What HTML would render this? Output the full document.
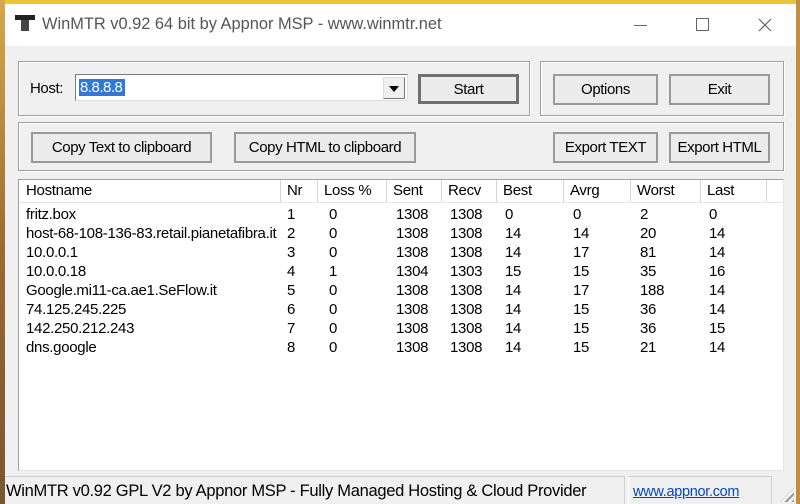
<!DOCTYPE html>
<html><head><meta charset="utf-8"><style>
*{box-sizing:border-box;margin:0;padding:0}
body{width:800px;height:504px;overflow:hidden;background:#f0f0f0;font-family:"Liberation Sans",Arial,sans-serif;position:relative;font-size:14px;color:#000}
.a{position:absolute;white-space:nowrap}
.grp{position:absolute;border:1px solid #a0a0a0;box-shadow:inset 1px 1px 0 #fff,1px 1px 0 #fff}
.btn{position:absolute;background:#ececec;border:2px solid #9a9a9a;display:flex;align-items:center;justify-content:center;font-size:15px;letter-spacing:-0.4px;white-space:nowrap}
.hd{position:absolute;top:0;height:22px;border-right:1px solid #d5d5d5;padding-left:6px;line-height:22px;font-size:15px;letter-spacing:-0.3px;white-space:nowrap}
.row{position:absolute;left:0;height:19px;font-size:15px;line-height:19px;letter-spacing:-0.3px;white-space:nowrap}
.row span{position:absolute}
</style></head><body>
<div class="a" style="left:0;top:0;width:800px;height:4px;background:#e8c63a"></div>
<div class="a" style="left:0;top:0;width:5px;height:504px;background:linear-gradient(#d8a84a,#9a6a30,#7a5530)"></div>
<div class="a" style="left:796px;top:0;width:4px;height:504px;background:#c09040"></div>
<div class="a" style="left:5px;top:4px;width:791px;height:42px;background:#fff"></div>
<div class="a" style="left:15px;top:15px;width:20px;height:5px;background:#222"></div>
<div class="a" style="left:21px;top:20px;width:8px;height:11px;background:#444"></div>
<div class="a" style="left:42px;top:15px;font-size:16.4px;color:#555">WinMTR v0.92 64 bit by Appnor MSP - www.winmtr.net</div>
<div class="a" style="left:634px;top:25px;width:13px;height:1px;background:#666"></div>
<div class="a" style="left:696px;top:18px;width:13px;height:13px;border:1px solid #666"></div>
<svg class="a" style="left:758px;top:18px" width="14" height="14"><path d="M1 1L13 13M13 1L1 13" stroke="#666" stroke-width="1.2"/></svg>

<div class="grp" style="left:18px;top:61px;width:512px;height:55px"></div>
<div class="grp" style="left:540px;top:61px;width:244px;height:55px"></div>
<div class="grp" style="left:18px;top:122px;width:766px;height:49px"></div>

<div class="a" style="left:30px;top:80px;font-size:15px;letter-spacing:-0.4px">Host:</div>
<div class="a" style="left:75px;top:74px;width:333px;height:27px;background:#fff;border:1px solid #7a7a7a;border-right-color:#ddd;border-bottom-color:#ddd"></div>
<div class="a" style="left:79px;top:79px;width:46px;height:17px;background:#3178d8"></div>
<div class="a" style="left:80px;top:79px;font-size:15px;color:#fff;letter-spacing:-0.5px">8.8.8.8</div>
<div class="a" style="left:383px;top:77px;width:22px;height:22px;background:#f0f0f0;border:1px solid #ddd;border-right-color:#777;border-bottom-color:#777"></div>
<div class="a" style="left:389px;top:86px;width:0;height:0;border-left:5px solid transparent;border-right:5px solid transparent;border-top:6px solid #000"></div>
<div class="btn" style="left:418px;top:74px;width:101px;height:30px;border:3px solid #707070">Start</div>
<div class="btn" style="left:553px;top:74px;width:105px;height:31px">Options</div>
<div class="btn" style="left:669px;top:74px;width:101px;height:31px">Exit</div>
<div class="btn" style="left:31px;top:132px;width:181px;height:31px">Copy Text to clipboard</div>
<div class="btn" style="left:234px;top:132px;width:182px;height:31px">Copy HTML to clipboard</div>
<div class="btn" style="left:553px;top:132px;width:105px;height:31px">Export TEXT</div>
<div class="btn" style="left:669px;top:132px;width:101px;height:31px">Export HTML</div>

<div class="a" style="left:18px;top:179px;width:766px;height:292px;background:#fff;border:1px solid #a0a0a0;border-right-color:#e5e5e5;border-bottom-color:#e5e5e5;overflow:hidden">
<div class="a" style="left:0;top:0;width:764px;height:23px;background:#fff;border-bottom:1px solid #e5e5e5"></div>
<div class="hd" style="left:1px;width:261px">Hostname</div>
<div class="hd" style="left:262px;width:37px">Nr</div>
<div class="hd" style="left:299px;width:69px">Loss %</div>
<div class="hd" style="left:368px;width:55px">Sent</div>
<div class="hd" style="left:423px;width:55px">Recv</div>
<div class="hd" style="left:478px;width:67px">Best</div>
<div class="hd" style="left:545px;width:67px">Avrg</div>
<div class="hd" style="left:612px;width:70px">Worst</div>
<div class="hd" style="left:682px;width:66px">Last</div>
<div id="rows"></div>
</div>

<div class="a" style="left:5px;top:476px;width:620px;height:28px;border-top:1px solid #d0d0d0;border-right:1px solid #d0d0d0"></div>
<div class="a" style="left:6px;top:482px;font-size:16.5px;letter-spacing:-0.3px">WinMTR v0.92 GPL V2 by Appnor MSP - Fully Managed Hosting &amp; Cloud Provider</div>
<div class="a" style="left:628px;top:476px;width:144px;height:28px;border-top:1px solid #d0d0d0;border-left:1px solid #fff;border-right:1px solid #d0d0d0"></div>
<div class="a" style="left:633px;top:484px;font-size:14.5px;color:#0645c8;text-decoration:underline;letter-spacing:-0.3px">www.appnor.com</div>
<div class="a" style="left:780px;top:488px;width:14px;height:14px;background:repeating-linear-gradient(135deg,transparent 0 3px,#999 3px 5px);clip-path:polygon(100% 0,100% 100%,0 100%)"></div>

<script>
var d=[["fritz.box",1,0,1308,1308,0,0,2,0],["host-68-108-136-83.retail.pianetafibra.it",2,0,1308,1308,14,14,20,14],["10.0.0.1",3,0,1308,1308,14,17,81,14],["10.0.0.18",4,1,1304,1303,15,15,35,16],["Google.mi11-ca.ae1.SeFlow.it",5,0,1308,1308,14,17,188,14],["74.125.245.225",6,0,1308,1308,14,15,36,14],["142.250.212.243",7,0,1308,1308,14,15,36,15],["dns.google",8,0,1308,1308,14,15,21,14]];
var x=[7,268,310,377,431,486,554,621,690],h="";
d.forEach(function(r,i){h+='<div class="row" style="top:'+(25+i*19)+'px">';r.forEach(function(c,j){h+='<span style="left:'+x[j]+'px">'+c+'</span>'});h+='</div>'});
document.getElementById('rows').innerHTML=h;
</script>
</body></html>
